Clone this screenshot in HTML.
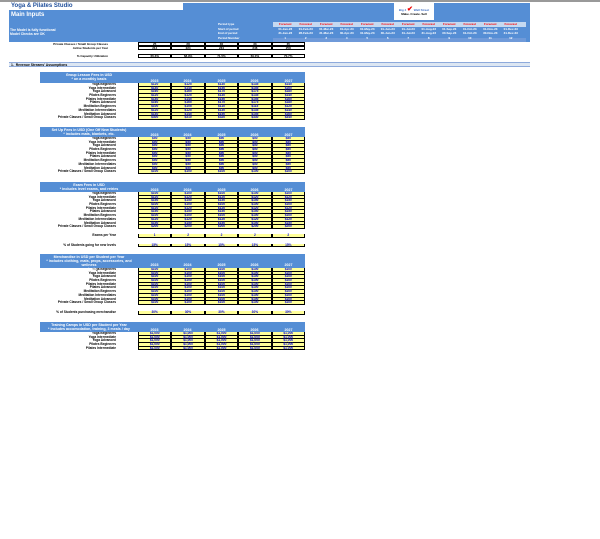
<!DOCTYPE html>
<html><head><meta charset="utf-8"><style>
*{margin:0;padding:0;box-sizing:border-box}
body{width:600px;height:539px;background:#fff;position:relative;overflow:hidden;font-family:"Liberation Sans",sans-serif;font-weight:bold;color:#000}
.a{position:absolute;white-space:nowrap}
.blue{background:#558ed5}
.t{font-size:4px;line-height:4px}
.tbl{position:absolute;left:40px;width:265px}
.hd{background:#558ed5;color:#fff;font-size:3.6px;position:relative}
.hd .l{position:absolute;left:0;width:98px;text-align:center}
.hd .y{position:absolute;width:33px;text-align:center}
.r{display:flex;height:3.7px;font-size:3.2px;line-height:3.7px}
.r .lb{width:78px;text-align:right;padding-right:2px}
.r .sp{width:20px}
.r .c{width:33.4px;background:#ffff99;border-left:1px solid #000;border-right:1px solid #000;border-bottom:0.4px solid #000;text-align:center;color:#0000dd;line-height:3.3px}
.box{display:flex;height:4px}
.box .c{width:33.4px;border:0.8px solid #000;font-size:3px;line-height:2.5px;text-align:center}
</style></head><body>
<div class="a" style="left:0;top:0;width:600px;height:2px;background:#999"></div>
<div class="a blue" style="left:9px;top:3px;width:521px;height:39px"></div>
<div class="a t" style="left:9px;top:3px;width:174px;height:7px;background:#fff;color:#1f4e9a;font-size:6px;line-height:7px;padding-left:2px">Yoga &amp; Pilates Studio</div>
<div class="a" style="left:11px;top:12px;color:#fff;font-size:6px;line-height:7px">Main Inputs</div>
<div class="a t" style="left:10px;top:28px;color:#fff;font-size:3.4px">The Model is fully functional<br>Model Checks are OK</div>
<div class="a" style="left:394px;top:3px;width:40px;height:17px;background:#fff;font-size:3px;color:#4472c4;text-align:center;padding-top:5px">Big 4 <span style="color:#e00;font-size:7px;line-height:3px">✔</span> Wall Street<br><span style="color:#000">Make. Create. Sell</span></div>
<div class="a" style="left:218px;top:22px;color:#fff;font-size:3px;line-height:4.5px">Period type<br>Start of period<br>End of period<br>Period Number</div>
<div class="a" style="left:273px;top:22px;width:253px;height:5px;background:#c5d9f1"></div>
<div class="a" style="left:273px;top:38px;width:253px;height:4px;background:#6f9ad9"></div>
<div class="a" style="left:275px;top:22px;display:flex;font-size:3px;line-height:4.5px;color:#fff;text-align:center">
<div style="width:20.5px"><span style="color:red">Forecast</span><br>01-Jan-23<br>31-Jan-23<br>1</div>
<div style="width:20.5px"><span style="color:red">Forecast</span><br>01-Feb-23<br>28-Feb-23<br>2</div>
<div style="width:20.5px"><span style="color:red">Forecast</span><br>01-Mar-23<br>31-Mar-23<br>3</div>
<div style="width:20.5px"><span style="color:red">Forecast</span><br>01-Apr-23<br>30-Apr-23<br>4</div>
<div style="width:20.5px"><span style="color:red">Forecast</span><br>01-May-23<br>31-May-23<br>5</div>
<div style="width:20.5px"><span style="color:red">Forecast</span><br>01-Jun-23<br>30-Jun-23<br>6</div>
<div style="width:20.5px"><span style="color:red">Forecast</span><br>01-Jul-23<br>31-Jul-23<br>7</div>
<div style="width:20.5px"><span style="color:red">Forecast</span><br>01-Aug-23<br>31-Aug-23<br>8</div>
<div style="width:20.5px"><span style="color:red">Forecast</span><br>01-Sep-23<br>30-Sep-23<br>9</div>
<div style="width:20.5px"><span style="color:red">Forecast</span><br>01-Oct-23<br>31-Oct-23<br>10</div>
<div style="width:20.5px"><span style="color:red">Forecast</span><br>01-Nov-23<br>30-Nov-23<br>11</div>
<div style="width:20.5px"><span style="color:red">Forecast</span><br>01-Dec-23<br>31-Dec-23<br>12</div>
</div>
<div class="a" style="left:40px;top:42px;width:68px;text-align:right;font-size:3px;line-height:4px">Private Classes / Small Group Classes<br>Active Students per Year</div>
<div class="a" style="left:138px;top:42px"><div class="box"><div class="c">25</div><div class="c">28</div><div class="c">30</div><div class="c">33</div><div class="c">35</div></div><div class="box"><div class="c">214</div><div class="c">224</div><div class="c">234</div><div class="c">246</div><div class="c">258</div></div></div>
<div class="a" style="left:40px;top:54px;width:68px;text-align:right;font-size:3px">% Capacity Utilization</div>
<div class="a" style="left:138px;top:54px"><div class="box"><div class="c">66.3%</div><div class="c">68.9%</div><div class="c">71.5%</div><div class="c">69.0%</div><div class="c">70.7%</div></div></div>
<div class="a" style="left:9px;top:62px;width:521px;height:5px;background:#dce6f2;border-top:0.8px solid #8eaadb;border-bottom:0.8px solid #8eaadb;font-size:3.4px;line-height:4px;padding-left:2px">1.&nbsp; Revenue Streams' Assumptions</div>

<div class="tbl" style="top:72px">
<div class="hd" style="height:11px"><div class="l" style="top:1px">Group Lesson Fees in USD<br>* on a monthly basis</div><div class="y" style="left:98px;top:7px">2023</div><div class="y" style="left:131px;top:7px">2024</div><div class="y" style="left:165px;top:7px">2025</div><div class="y" style="left:198px;top:7px">2026</div><div class="y" style="left:232px;top:7px">2027</div></div>
<div class="r"><span class="lb">Yoga Beginners</span><span class="sp"></span><span class="c">$120</span><span class="c">$125</span><span class="c">$130</span><span class="c">$135</span><span class="c">$140</span></div>
<div class="r"><span class="lb">Yoga Intermediate</span><span class="sp"></span><span class="c">$140</span><span class="c">$145</span><span class="c">$150</span><span class="c">$155</span><span class="c">$160</span></div>
<div class="r"><span class="lb">Yoga Advanced</span><span class="sp"></span><span class="c">$160</span><span class="c">$165</span><span class="c">$170</span><span class="c">$175</span><span class="c">$180</span></div>
<div class="r"><span class="lb">Pilates Beginners</span><span class="sp"></span><span class="c">$120</span><span class="c">$125</span><span class="c">$130</span><span class="c">$135</span><span class="c">$140</span></div>
<div class="r"><span class="lb">Pilates Intermediate</span><span class="sp"></span><span class="c">$140</span><span class="c">$145</span><span class="c">$150</span><span class="c">$155</span><span class="c">$160</span></div>
<div class="r"><span class="lb">Pilates Advanced</span><span class="sp"></span><span class="c">$160</span><span class="c">$165</span><span class="c">$170</span><span class="c">$175</span><span class="c">$180</span></div>
<div class="r"><span class="lb">Meditation Beginners</span><span class="sp"></span><span class="c">$100</span><span class="c">$105</span><span class="c">$110</span><span class="c">$115</span><span class="c">$120</span></div>
<div class="r"><span class="lb">Meditation Intermediates</span><span class="sp"></span><span class="c">$120</span><span class="c">$125</span><span class="c">$130</span><span class="c">$135</span><span class="c">$140</span></div>
<div class="r"><span class="lb">Meditation Advanced</span><span class="sp"></span><span class="c">$140</span><span class="c">$145</span><span class="c">$150</span><span class="c">$155</span><span class="c">$160</span></div>
<div class="r"><span class="lb">Private Classes / Small Group Classes</span><span class="sp"></span><span class="c">$300</span><span class="c">$310</span><span class="c">$320</span><span class="c">$330</span><span class="c">$340</span></div>
</div>

<div class="tbl" style="top:127px">
<div class="hd" style="height:10px"><div class="l" style="top:0.5px">Set Up Fees in USD (One Off New Students)<br>* includes mats, blankets, etc.</div><div class="y" style="left:98px;top:6px">2023</div><div class="y" style="left:131px;top:6px">2024</div><div class="y" style="left:165px;top:6px">2025</div><div class="y" style="left:198px;top:6px">2026</div><div class="y" style="left:232px;top:6px">2027</div></div>
<div class="r"><span class="lb">Yoga Beginners</span><span class="sp"></span><span class="c">$50</span><span class="c">$50</span><span class="c">$50</span><span class="c">$50</span><span class="c">$50</span></div>
<div class="r"><span class="lb">Yoga Intermediate</span><span class="sp"></span><span class="c">$50</span><span class="c">$50</span><span class="c">$50</span><span class="c">$50</span><span class="c">$50</span></div>
<div class="r"><span class="lb">Yoga Advanced</span><span class="sp"></span><span class="c">$50</span><span class="c">$50</span><span class="c">$50</span><span class="c">$50</span><span class="c">$50</span></div>
<div class="r"><span class="lb">Pilates Beginners</span><span class="sp"></span><span class="c">$50</span><span class="c">$50</span><span class="c">$50</span><span class="c">$50</span><span class="c">$50</span></div>
<div class="r"><span class="lb">Pilates Intermediate</span><span class="sp"></span><span class="c">$50</span><span class="c">$50</span><span class="c">$50</span><span class="c">$50</span><span class="c">$50</span></div>
<div class="r"><span class="lb">Pilates Advanced</span><span class="sp"></span><span class="c">$50</span><span class="c">$50</span><span class="c">$50</span><span class="c">$50</span><span class="c">$50</span></div>
<div class="r"><span class="lb">Meditation Beginners</span><span class="sp"></span><span class="c">$50</span><span class="c">$50</span><span class="c">$50</span><span class="c">$50</span><span class="c">$50</span></div>
<div class="r"><span class="lb">Meditation Intermediates</span><span class="sp"></span><span class="c">$50</span><span class="c">$50</span><span class="c">$50</span><span class="c">$50</span><span class="c">$50</span></div>
<div class="r"><span class="lb">Meditation Advanced</span><span class="sp"></span><span class="c">$50</span><span class="c">$50</span><span class="c">$50</span><span class="c">$50</span><span class="c">$50</span></div>
<div class="r"><span class="lb">Private Classes / Small Group Classes</span><span class="sp"></span><span class="c">$100</span><span class="c">$100</span><span class="c">$100</span><span class="c">$100</span><span class="c">$100</span></div>
</div>

<div class="tbl" style="top:182px">
<div class="hd" style="height:10px"><div class="l" style="top:0.5px">Exam Fees in USD<br>* includes level exams, and retries</div><div class="y" style="left:98px;top:6px">2023</div><div class="y" style="left:131px;top:6px">2024</div><div class="y" style="left:165px;top:6px">2025</div><div class="y" style="left:198px;top:6px">2026</div><div class="y" style="left:232px;top:6px">2027</div></div>
<div class="r"><span class="lb">Yoga Beginners</span><span class="sp"></span><span class="c">$100</span><span class="c">$100</span><span class="c">$100</span><span class="c">$100</span><span class="c">$100</span></div>
<div class="r"><span class="lb">Yoga Intermediate</span><span class="sp"></span><span class="c">$120</span><span class="c">$120</span><span class="c">$120</span><span class="c">$120</span><span class="c">$120</span></div>
<div class="r"><span class="lb">Yoga Advanced</span><span class="sp"></span><span class="c">$150</span><span class="c">$150</span><span class="c">$150</span><span class="c">$150</span><span class="c">$150</span></div>
<div class="r"><span class="lb">Pilates Beginners</span><span class="sp"></span><span class="c">$100</span><span class="c">$100</span><span class="c">$100</span><span class="c">$100</span><span class="c">$100</span></div>
<div class="r"><span class="lb">Pilates Intermediate</span><span class="sp"></span><span class="c">$120</span><span class="c">$120</span><span class="c">$120</span><span class="c">$120</span><span class="c">$120</span></div>
<div class="r"><span class="lb">Pilates Advanced</span><span class="sp"></span><span class="c">$150</span><span class="c">$150</span><span class="c">$150</span><span class="c">$150</span><span class="c">$150</span></div>
<div class="r"><span class="lb">Meditation Beginners</span><span class="sp"></span><span class="c">$100</span><span class="c">$100</span><span class="c">$100</span><span class="c">$100</span><span class="c">$100</span></div>
<div class="r"><span class="lb">Meditation Intermediates</span><span class="sp"></span><span class="c">$120</span><span class="c">$120</span><span class="c">$120</span><span class="c">$120</span><span class="c">$120</span></div>
<div class="r"><span class="lb">Meditation Advanced</span><span class="sp"></span><span class="c">$150</span><span class="c">$150</span><span class="c">$150</span><span class="c">$150</span><span class="c">$150</span></div>
<div class="r"><span class="lb">Private Classes / Small Group Classes</span><span class="sp"></span><span class="c">$200</span><span class="c">$200</span><span class="c">$200</span><span class="c">$200</span><span class="c">$200</span></div>
<div style="height:5px"></div>
<div class="r"><span class="lb">Exams per Year</span><span class="sp"></span><span class="c">1</span><span class="c">2</span><span class="c">2</span><span class="c">2</span><span class="c">2</span></div>
<div style="height:6px"></div>
<div class="r"><span class="lb">% of Students going for new levels</span><span class="sp"></span><span class="c">15%</span><span class="c">15%</span><span class="c">15%</span><span class="c">15%</span><span class="c">15%</span></div>
</div>

<div class="tbl" style="top:254px">
<div class="hd" style="height:14px"><div class="l" style="top:0.5px">Merchandise in USD per Student per Year<br>* includes clothing, mats, props, accessories, and wellness<br>products</div><div class="y" style="left:98px;top:9px">2023</div><div class="y" style="left:131px;top:9px">2024</div><div class="y" style="left:165px;top:9px">2025</div><div class="y" style="left:198px;top:9px">2026</div><div class="y" style="left:232px;top:9px">2027</div></div>
<div class="r"><span class="lb">Yoga Beginners</span><span class="sp"></span><span class="c">$100</span><span class="c">$100</span><span class="c">$100</span><span class="c">$100</span><span class="c">$100</span></div>
<div class="r"><span class="lb">Yoga Intermediate</span><span class="sp"></span><span class="c">$100</span><span class="c">$100</span><span class="c">$100</span><span class="c">$100</span><span class="c">$100</span></div>
<div class="r"><span class="lb">Yoga Advanced</span><span class="sp"></span><span class="c">$100</span><span class="c">$100</span><span class="c">$100</span><span class="c">$100</span><span class="c">$100</span></div>
<div class="r"><span class="lb">Pilates Beginners</span><span class="sp"></span><span class="c">$100</span><span class="c">$100</span><span class="c">$100</span><span class="c">$100</span><span class="c">$100</span></div>
<div class="r"><span class="lb">Pilates Intermediate</span><span class="sp"></span><span class="c">$100</span><span class="c">$100</span><span class="c">$100</span><span class="c">$100</span><span class="c">$100</span></div>
<div class="r"><span class="lb">Pilates Advanced</span><span class="sp"></span><span class="c">$100</span><span class="c">$100</span><span class="c">$100</span><span class="c">$100</span><span class="c">$100</span></div>
<div class="r"><span class="lb">Meditation Beginners</span><span class="sp"></span><span class="c">$100</span><span class="c">$100</span><span class="c">$100</span><span class="c">$100</span><span class="c">$100</span></div>
<div class="r"><span class="lb">Meditation Intermediates</span><span class="sp"></span><span class="c">$100</span><span class="c">$100</span><span class="c">$100</span><span class="c">$100</span><span class="c">$100</span></div>
<div class="r"><span class="lb">Meditation Advanced</span><span class="sp"></span><span class="c">$100</span><span class="c">$100</span><span class="c">$100</span><span class="c">$100</span><span class="c">$100</span></div>
<div class="r"><span class="lb">Private Classes / Small Group Classes</span><span class="sp"></span><span class="c">$100</span><span class="c">$100</span><span class="c">$100</span><span class="c">$100</span><span class="c">$100</span></div>
<div style="height:6px"></div>
<div class="r"><span class="lb">% of Students purchasing merchandise</span><span class="sp"></span><span class="c">30%</span><span class="c">30%</span><span class="c">30%</span><span class="c">30%</span><span class="c">30%</span></div>
</div>

<div class="tbl" style="top:322px">
<div class="hd" style="height:10px"><div class="l" style="top:0.5px">Training Camps in USD per Student per Year<br>* includes accomodation, training, 3 meals / day</div><div class="y" style="left:98px;top:6px">2023</div><div class="y" style="left:131px;top:6px">2024</div><div class="y" style="left:165px;top:6px">2025</div><div class="y" style="left:198px;top:6px">2026</div><div class="y" style="left:232px;top:6px">2027</div></div>
<div class="r"><span class="lb">Yoga Beginners</span><span class="sp"></span><span class="c">$1,000</span><span class="c">$1,000</span><span class="c">$1,000</span><span class="c">$1,000</span><span class="c">$1,000</span></div>
<div class="r"><span class="lb">Yoga Intermediate</span><span class="sp"></span><span class="c">$1,000</span><span class="c">$1,000</span><span class="c">$1,000</span><span class="c">$1,000</span><span class="c">$1,000</span></div>
<div class="r"><span class="lb">Yoga Advanced</span><span class="sp"></span><span class="c">$1,000</span><span class="c">$1,000</span><span class="c">$1,000</span><span class="c">$1,000</span><span class="c">$1,000</span></div>
<div class="r"><span class="lb">Pilates Beginners</span><span class="sp"></span><span class="c">$1,000</span><span class="c">$1,000</span><span class="c">$1,000</span><span class="c">$1,000</span><span class="c">$1,000</span></div>
<div class="r"><span class="lb">Pilates Intermediate</span><span class="sp"></span><span class="c">$1,000</span><span class="c">$1,000</span><span class="c">$1,000</span><span class="c">$1,000</span><span class="c">$1,000</span></div>
</div>
</body></html>
